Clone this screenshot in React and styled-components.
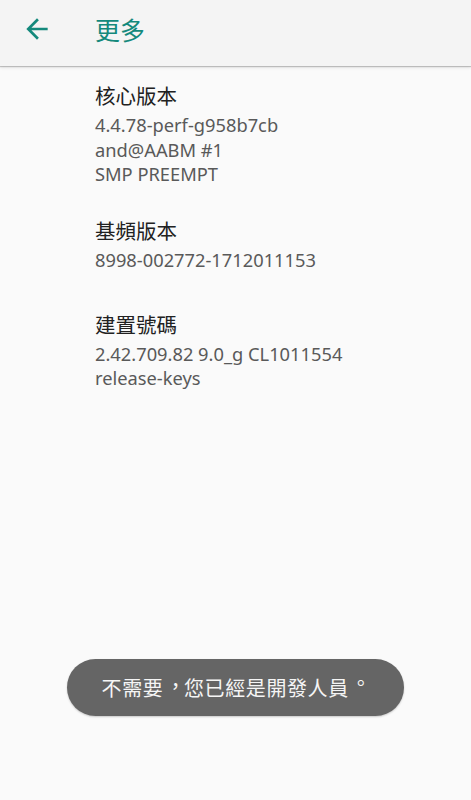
import React from "react";
import styled, { createGlobalStyle } from "styled-components";

const Global = createGlobalStyle`
  html, body { margin: 0; padding: 0; background: #fafafa; }
  body { font-family: "Noto Sans", "Noto Sans CJK TC", sans-serif; }
`;

const Page = styled.div`
  width: 471px;
  height: 800px;
  background: #fafafa;
  display: flex;
  flex-direction: column;
  position: relative;
  overflow: hidden;
`;

const Toolbar = styled.header`
  height: 66px;
  box-sizing: border-box;
  padding-bottom: 8px;
  background: #f4f4f4;
  display: flex;
  align-items: center;
  box-shadow: 0 1px 1px rgba(0,0,0,0.2), 0 2px 3px rgba(0,0,0,0.08);
  position: relative;
  z-index: 1;
  flex-shrink: 0;
`;

const BackButton = styled.div`
  width: 32px;
  height: 32px;
  margin-left: 21px;
  display: flex;
  align-items: center;
  justify-content: center;
`;

const Title = styled.h1`
  margin: 0 0 0 42px;
  font-family: "Noto Sans CJK TC", sans-serif;
  font-weight: 400;
  font-size: 25px;
  line-height: 32px;
  color: #14897c;
`;

const List = styled.div`
  display: flex;
  flex-direction: column;
  padding-left: 95px;
`;

const Item = styled.div`
  display: flex;
  flex-direction: column;
  box-sizing: border-box;
  min-height: 94px;
  padding: 15px 0 14px;
`;

const Label = styled.div`
  font-family: "Noto Sans CJK TC", sans-serif;
  font-size: 20.5px;
  line-height: 28px;
  margin-bottom: 4px;
  color: #212121;
`;

const Value = styled.div`
  font-family: "Noto Sans", "Noto Sans CJK TC", sans-serif;
  font-size: 18.3px;
  line-height: 24.5px;
  color: #595959;
  white-space: pre-line;
`;

const Toast = styled.div`
  position: absolute;
  left: 67px;
  top: 659px;
  width: 337px;
  height: 57px;
  border-radius: 29px;
  background: #656565;
  box-shadow: 0 1px 2px rgba(0,0,0,0.2);
  display: flex;
  align-items: center;
  justify-content: center;
  color: #f5f5f5;
  font-family: "Noto Sans CJK TC", sans-serif;
  font-size: 20px;
  letter-spacing: 0.6px;
`;

/* Traditional-Chinese punctuation sits centred in its em box */
const Punct = styled.span`
  display: inline-block;
  transform: translate(${(p) => p.$dx}em, ${(p) => p.$dy}em);
`;

const items = [
  { label: "核心版本", value: "4.4.78-perf-g958b7cb\nand@AABM #1\nSMP PREEMPT" },
  { label: "基頻版本", value: "8998-002772-1712011153" },
  { label: "建置號碼", value: "2.42.709.82 9.0_g CL1011554\nrelease-keys" },
];

export default function App() {
  return (
    <Page lang="zh-Hant-TW">
      <Global />
      <Toolbar>
        <BackButton>
          <svg width="32" height="32" viewBox="0 0 24 24">
            <path d="M20 11H7.83l5.59-5.59L12 4l-8 8 8 8 1.41-1.41L7.83 13H20v-2z" fill="#14897c" />
          </svg>
        </BackButton>
        <Title>更多</Title>
      </Toolbar>
      <List>
        {items.map((it) => (
          <Item key={it.label}>
            <Label>{it.label}</Label>
            <Value>{it.value}</Value>
          </Item>
        ))}
      </List>
      <Toast>
        不需要<Punct $dx={0.1} $dy={-0.12}>，</Punct>您已經是開發人員<Punct $dx={0.1} $dy={-0.25}>。</Punct>
      </Toast>
    </Page>
  );
}
